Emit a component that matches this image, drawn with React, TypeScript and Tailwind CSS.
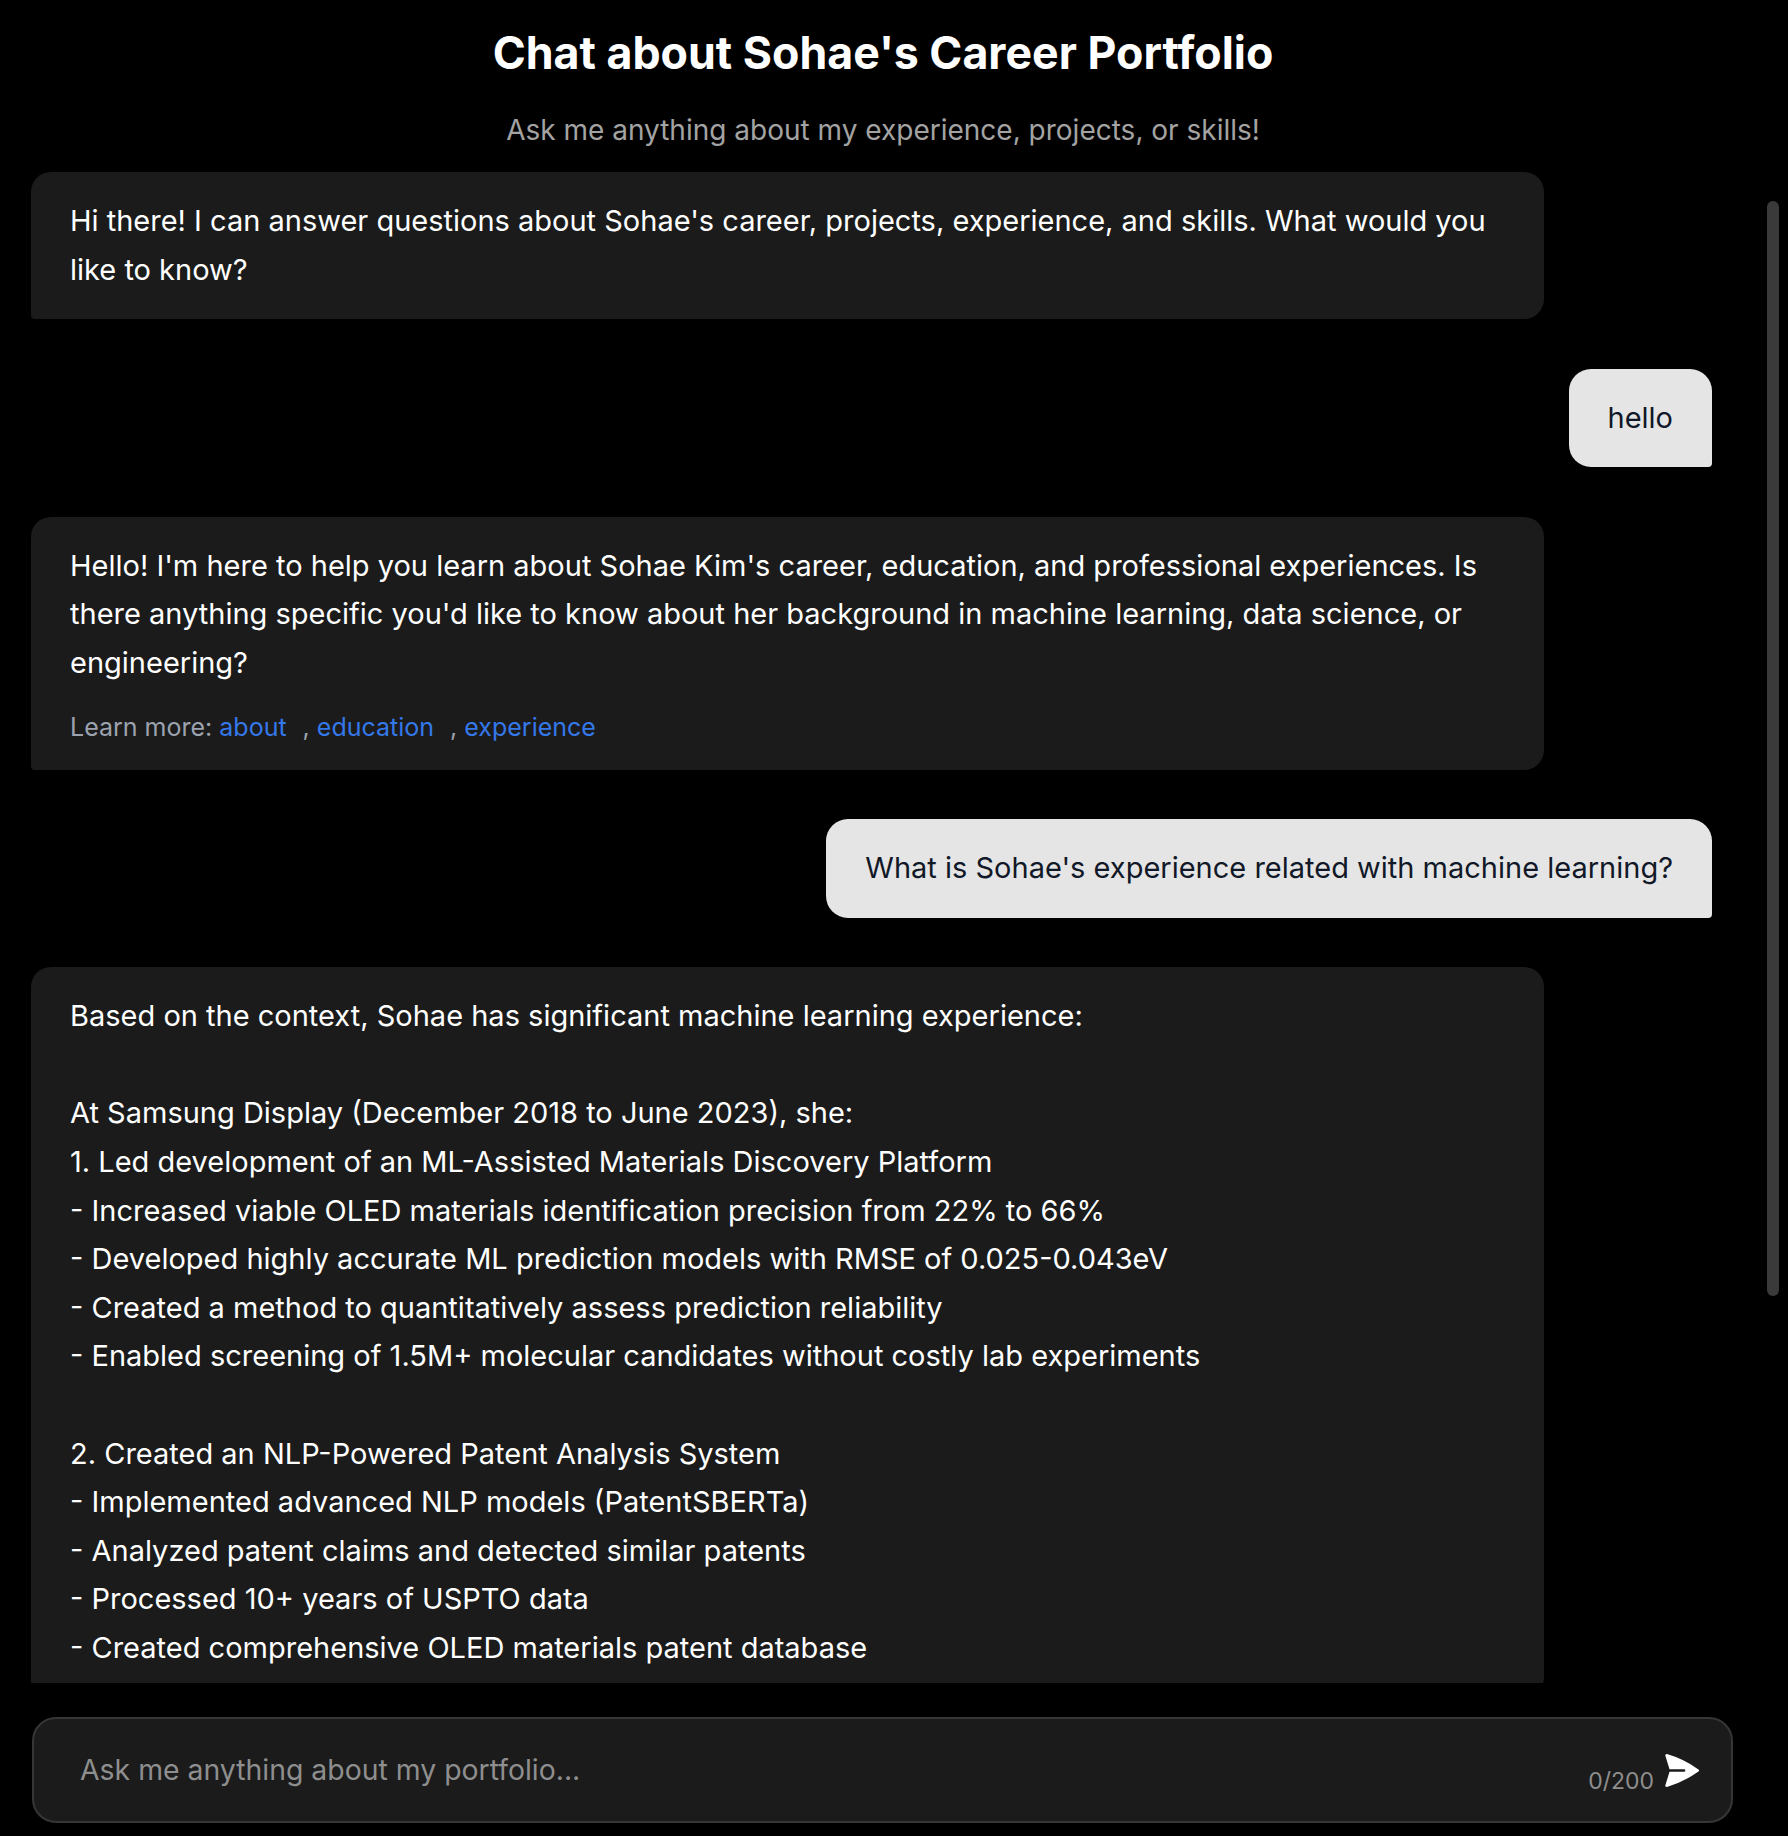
import { useState } from "react";

type Message = {
  role: "assistant" | "user";
  text: string;
  links?: string[];
};

const messages: Message[] = [
  {
    role: "assistant",
    text: "Hi there! I can answer questions about Sohae's career, projects, experience, and skills. What would you like to know?",
  },
  { role: "user", text: "hello" },
  {
    role: "assistant",
    text: "Hello! I'm here to help you learn about Sohae Kim's career, education, and professional experiences. Is there anything specific you'd like to know about her background in machine learning, data science, or engineering?",
    links: ["about", "education", "experience"],
  },
  { role: "user", text: "What is Sohae's experience related with machine learning?" },
  {
    role: "assistant",
    text: `Based on the context, Sohae has significant machine learning experience:

At Samsung Display (December 2018 to June 2023), she:
1. Led development of an ML-Assisted Materials Discovery Platform
- Increased viable OLED materials identification precision from 22% to 66%
- Developed highly accurate ML prediction models with RMSE of 0.025-0.043eV
- Created a method to quantitatively assess prediction reliability
- Enabled screening of 1.5M+ molecular candidates without costly lab experiments

2. Created an NLP-Powered Patent Analysis System
- Implemented advanced NLP models (PatentSBERTa)
- Analyzed patent claims and detected similar patents
- Processed 10+ years of USPTO data
- Created comprehensive OLED materials patent database`,
  },
];

const SendIcon = () => (
  <svg viewBox="0 0 24 24" fill="currentColor" className="w-[41px] h-[41px] text-white shrink-0">
    <path d="M3.478 2.404a.75.75 0 0 0-.926.941l2.432 7.905H13.5a.75.75 0 0 1 0 1.5H4.984l-2.432 7.905a.75.75 0 0 0 .926.94 60.519 60.519 0 0 0 18.445-8.986.75.75 0 0 0 0-1.218A60.517 60.517 0 0 0 3.478 2.404Z" />
  </svg>
);

const Bubble = ({ message }: { message: Message }) => {
  if (message.role === "user") {
    return (
      <div className="flex justify-end">
        <div className="bg-[#e5e5e5] text-[#111827] rounded-[22px] rounded-br-[4px] px-[39px] py-[25px] text-[29px] leading-[48.6px] max-w-[90%]">
          {message.text}
        </div>
      </div>
    );
  }
  return (
    <div className="flex justify-start">
      <div className="bg-[#1b1b1b] text-white rounded-[20px] rounded-bl-[4px] px-[39px] py-[25px] w-[90%]">
        <p className="text-[29px] leading-[48.6px] whitespace-pre-wrap">{message.text}</p>
        {message.links && (
          <div className="mt-[21px] text-[25px] leading-[36px] text-[#9ca3af]">
            Learn more:{" "}
            {message.links.map((link, i) => (
              <span key={link}>
                <a href={`#${link}`} className="text-[#3478ea] mr-[16px]">
                  {link}
                </a>
                {i < message.links!.length - 1 && ", "}
              </span>
            ))}
          </div>
        )}
      </div>
    </div>
  );
};

export default function App() {
  const [input, setInput] = useState("");

  return (
    <div className="h-screen flex flex-col bg-black font-[Inter,'Noto_Sans',sans-serif] overflow-hidden">
      <header className="pt-[27px] pr-[22px] text-center">
        <h1 className="text-[44.7px] font-bold leading-[53px] text-white">Chat about Sohae's Career Portfolio</h1>
        <p className="mt-[30px] text-[28px] leading-[40px] text-[#a3a3a3]">
          Ask me anything about my experience, projects, or skills!
        </p>
      </header>

      <div className="mt-[10px] flex-1 min-h-0 flex pl-[31px] pr-[9px]">
        <div className="flex-1 min-w-0 overflow-y-auto pt-[12px] [scrollbar-width:none]">
          <div className="flex flex-col gap-[49.5px]">
            {messages.map((m, i) => (
              <Bubble key={i} message={m} />
            ))}
          </div>
        </div>
        {/* scrollbar rail */}
        <div className="ml-[55px] w-[12px] shrink-0">
          <div className="mt-[41px] h-[1095px] rounded-full bg-[#3a3a3a]" />
        </div>
      </div>

      <div className="mt-[34px] mb-[13px] ml-[32px] mr-[55px] h-[106px] shrink-0 flex items-center border-2 border-[#363636] rounded-[24px] bg-[#1b1b1b] pl-[46px] pr-[29px]">
        <input
          value={input}
          onChange={(e) => setInput(e.target.value.slice(0, 200))}
          placeholder="Ask me anything about my portfolio..."
          className="flex-1 bg-transparent outline-none text-[28.4px] text-white placeholder:text-[#8e8e8e]"
        />
        <span className="mt-[22px] text-[23px] leading-[28px] text-[#8e8e8e]">{input.length}/200</span>
        <button className="ml-[7px]">
          <SendIcon />
        </button>
      </div>
    </div>
  );
}
